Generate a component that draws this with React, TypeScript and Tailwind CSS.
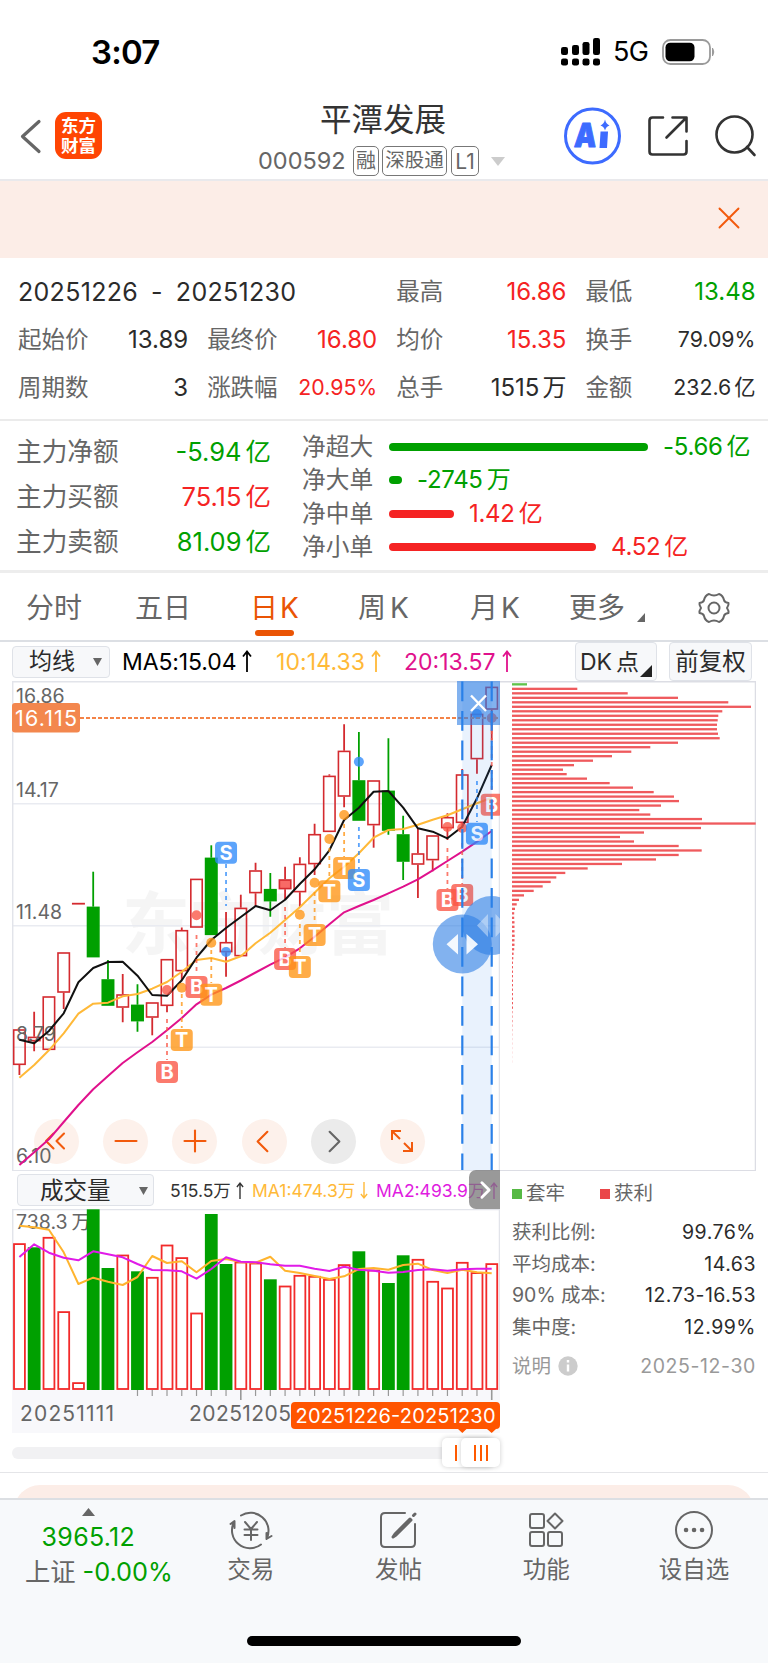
import { ChevronLeft, ChevronRight, ChevronsLeft, Minus, Plus, X } from 'lucide-react';
import type { ReactNode } from 'react';

const RED = '#d42a2f';
const GREEN = '#00a000';

// x position of the n-th trading day
const cx = (i: number) => 19.4 + 14.76 * i;
const toPoints = (ys: number[]) => ys.map((y, i) => `${cx(i).toFixed(1)},${y}`).join(' ');

// [kind, high, bodyTop, bodyBottom, low], kind: 0 down, 1 up, 2 flat, 3 up and filled
const candles: [number, number, number, number, number][] = [
    [1, 1029.3, 1029.3, 1065, 1075],
    [1, 1011.7, 1036.7, 1041.3, 1051.3],
    [1, 996.3, 996.3, 1050, 1050],
    [1, 952.3, 952.3, 992.7, 1009],
    [2, 903.7, 903.7, 903.7, 903.7],
    [0, 871.7, 906.7, 957.3, 957.3],
    [0, 960, 979.3, 1005.7, 1005.7],
    [1, 974, 994.3, 1007.7, 1022.3],
    [0, 984.3, 1004.7, 1021.3, 1031.7],
    [1, 1002.3, 1002.3, 1017.7, 1035.3],
    [1, 959, 959, 1006, 1012.3],
    [1, 927.5, 930, 971.3, 980],
    [1, 878.7, 878.7, 927.7, 927.7],
    [0, 845.3, 857.7, 935, 935],
    [1, 912, 942, 952.3, 976.7],
    [1, 894.7, 907.7, 956.3, 956.3],
    [1, 862.7, 870.3, 893.3, 907],
    [0, 873, 889, 901.3, 916.7],
    [3, 866.7, 879.3, 889.3, 900],
    [1, 857.3, 863.7, 892.3, 906.7],
    [1, 823.7, 834, 864.3, 875],
    [1, 774.3, 775.7, 832, 832],
    [1, 724.3, 750.7, 796.7, 807.3],
    [0, 732, 780.3, 820.7, 820.7],
    [1, 780.3, 780.3, 825.3, 847.7],
    [0, 738.3, 790.7, 830.7, 834.7],
    [0, 815.7, 834.3, 861.7, 880],
    [1, 828.3, 853.3, 864.7, 898],
    [1, 835.3, 835.3, 860.3, 871.3],
    [1, 813.3, 817, 828.3, 840],
    [1, 769, 774.3, 823, 828],
    [1, 713.7, 713.7, 759.3, 773.7],
    [1, 686.7, 686.7, 709.7, 740],
];

const ma5 = [1039.7, 1043.3, 1031, 1013.3, 982.3, 968, 962, 961.7, 975.7, 995, 995.7, 980.3, 957.7, 940, 928, 917, 906, 910.3, 899.7, 884, 869.3, 850.3, 820, 807.7, 791.7, 791, 807.7, 828.3, 831.7, 838.3, 826.7, 798.3, 765];
const ma10 = [1077.7, 1065, 1050.3, 1033.3, 1013.7, 1003.7, 1002.7, 996.3, 994, 988.7, 982, 971.7, 960, 958, 961.7, 956.3, 943.3, 932.7, 920, 907.3, 892.7, 878.3, 866.7, 853.3, 837.7, 830, 829, 824.7, 819.7, 815.3, 809.3, 803.3, 797.7];
const ma20 = [1165, 1152.3, 1139.3, 1122, 1105, 1089.3, 1076, 1063, 1052.3, 1042, 1030.3, 1018, 1004.3, 994.7, 988, 980.5, 972.5, 964.7, 957.3, 948.3, 936.7, 924.3, 912.3, 906, 900, 893.3, 886.7, 879.3, 870.3, 861, 851.7, 841.7, 831];

// day index, label, badge y, dot y (0 = none), dash from, dash to
const markers: [number, 'B' | 'S' | 'T', number, number, number, number][] = [
    [10, 'B', 1072, 990, 1019, 1060],
    [11, 'T', 1040, 987.7, 994, 1028],
    [12, 'B', 987, 915.3, 935, 975],
    [13, 'T', 994.7, 942.7, 950, 983],
    [14, 'S', 852.7, 952, 864, 906],
    [18, 'B', 959, 0, 907, 948],
    [19, 'T', 967, 914.7, 924, 956],
    [20, 'T', 935, 882.7, 892, 924],
    [21, 'T', 891.3, 839, 848, 880],
    [22, 'T', 868, 815, 824, 857],
    [23, 'S', 880, 761.7, 827, 869],
    [29, 'B', 900, 827, 848, 890],
    [30, 'B', 895, 828, 843, 884],
    [31, 'S', 833.7, 714, 781, 822],
    [32, 'B', 804.7, 718, 722, 794],
];
const markerColor = { B: '#fb5545', S: '#2f8bfb', T: '#ff9614' };

// [up, top]
const volumes: [number, number][] = [
    [1, 1243.3], [0, 1247.3], [1, 1237], [1, 1311.3], [1, 1382.3], [0, 1209.3], [0, 1268], [1, 1254.7], [0, 1271.3], [1, 1277], [1, 1244.7],
    [1, 1257.3], [1, 1312.7], [0, 1214], [0, 1264], [1, 1261.7], [1, 1262.7], [0, 1279.3], [1, 1285.7], [1, 1275], [1, 1276], [1, 1279],
    [1, 1264.3], [0, 1251.3], [1, 1269.7], [0, 1283], [0, 1255.3], [1, 1259], [1, 1281], [1, 1287.7], [1, 1262], [1, 1272.3], [1, 1263.3],
];
const volMa1 = [182, 187, 194, 262, 357, 338, 350, 360, 336, 273, 294, 289, 322, 288, 282, 291, 293, 275, 317, 324, 333, 342, 334, 312, 309, 314, 300, 296, 315, 324, 314, 322, 325].map((v) => +(1165 + v / 3).toFixed(1));
const volMa2 = [276, 238, 263, 278, 286, 259, 268, 277, 297, 315, 316, 319, 341, 312, 277, 290, 292, 298, 302, 302, 311, 318, 305, 314, 317, 323, 321, 315, 313, 317, 313, 311, 311].map((v) => +(1165 + v / 3).toFixed(1));

// cost distribution, bar lengths from the top price down
const chips = [
    15, 65.3, 115.7, 166, 216.3, 239, 210.3, 206.3, 205.7, 205, 205, 206, 207.7, 166, 138.3, 119.3, 100, 81, 62, 51, 54.7, 75, 97.7, 121, 141.7,
    162, 167, 149, 127.3, 138.3, 190, 243.7, 189, 132, 108, 122, 166.7, 189.7, 166.7, 144, 110, 75.7, 53.3, 44.3, 38.7, 30.7, 21.7, 12, 7, 4.7,
    3, 2.2, 2.2, 2.5, 2.5, 2.5, 2.7, 2.5, 2.5, 2.2, 1.6, 1.3, 1, 1, 1, 1, 1, 1, 1, 1, 1, 1, 1, 1, 1, 1, 0.8, 0.6, 0.5, 0.4, 0.4, 0.3, 0.3, 0.2, 0.2,
];

function Stat({ label, value, unit, className = '' }: { label: string; value: string; unit?: string; className?: string }) {
    return (
        <div className="flex h-12 items-center justify-between whitespace-nowrap">
            <span className="text-[23.5px] text-[#666]">{label}</span>
            <span className={`text-[24px] ${className || 'text-[#2b2b2b]'}`}>
                {value}
                {unit && <span className="ml-[3px]">{unit}</span>}
            </span>
        </div>
    );
}

function Flow({ label, value, red = false }: { label: string; value: string; red?: boolean }) {
    return (
        <div className="flex h-[45.3px] items-center justify-between whitespace-nowrap">
            <span className="text-[25.7px] text-[#666]">{label}</span>
            <span className={`text-[25.5px] ${red ? 'text-[#f52323]' : 'text-[#00a000]'}`}>
                {value}
                <span className="ml-[4px]">亿</span>
            </span>
        </div>
    );
}

function OrderBar({ label, value, unit, width, red = false }: { label: string; value: string; unit: string; width: number; red?: boolean }) {
    return (
        <div className="flex h-[33.5px] items-center whitespace-nowrap">
            <span className="w-[87px] text-[23.7px] text-[#666]">{label}</span>
            <span className={`h-2 rounded-full ${red ? 'bg-[#f52323]' : 'bg-[#00a000]'}`} style={{ width }} />
            <span className={`ml-[15px] text-[24px] tracking-[-0.3px] ${red ? 'text-[#f52323]' : 'text-[#00a000]'}`}>
                {value}
                <span className="ml-[4px]">{unit}</span>
            </span>
        </div>
    );
}

function RoundButton({ children, gray = false }: { children: ReactNode; gray?: boolean }) {
    return (
        <button className={`flex size-[45px] items-center justify-center rounded-full ${gray ? 'bg-[#ebebeb] text-[#666]' : 'bg-[#fdf1eb] text-[#f25a0c]'}`}>
            {children}
        </button>
    );
}

function InfoRow({ label, value }: { label: string; value: string }) {
    return (
        <div className="flex h-[31.6px] items-center justify-between whitespace-nowrap">
            <span className="text-[#666]">{label}</span>
            <span className="tracking-[0.5px] text-[#2b2b2b]">{value}</span>
        </div>
    );
}

function NavItem({ label, children }: { label: string; children: ReactNode }) {
    return (
        <div className="flex w-[148px] flex-col items-center">
            <svg width="44" height="44" viewBox="-22 -22 44 44" fill="none" stroke="#666" strokeWidth="2" strokeLinecap="round" strokeLinejoin="round">
                {children}
            </svg>
            <span className="mt-[6px] text-[23.5px] leading-[24px] text-[#666]">{label}</span>
        </div>
    );
}

// thin arrow behind the average values
function Trend({ down = false, small = false }: { down?: boolean; small?: boolean }) {
    return (
        <svg
            width={small ? 8 : 10}
            height={small ? 17 : 22}
            viewBox="0 0 10 22"
            className={`inline-block ${small ? 'ml-[5px]' : 'ml-[6px]'} align-[-2px] ${down ? 'rotate-180' : ''}`}
            fill="none"
            stroke="currentColor"
            strokeWidth="1.8"
        >
            <path d="M5 22V1.500M1 6.500L5 1.500L9 6.500" />
        </svg>
    );
}

function StatusBar() {
    return (
        <div className="flex h-[100px] items-center pt-[3px] pl-[91px] text-black">
            <span className="mt-[2px] w-[470px] text-[33px] font-semibold tracking-[-0.8px]">3:07</span>
            <svg width="40" height="28" viewBox="0 0 40 28">
                {[[0, 9], [11, 7], [21.5, 4], [32, 0]].map(([x, y]) => (
                    <g key={x}>
                        <rect x={x} y={y} width="7" height={17 - y} rx="2.2" />
                        <rect x={x} y="20.5" width="7" height="7" rx="2.2" />
                    </g>
                ))}
            </svg>
            <span className="mt-[2px] ml-[12px] w-[50px] text-[27px] tracking-[-0.6px]">5G</span>
            <svg width="54" height="26" viewBox="0 0 54 26" className="-ml-px">
                <rect x="1" y="1" width="47" height="24" rx="7.5" fill="none" stroke="#9a9a9a" strokeWidth="1.8" />
                <rect x="3.5" y="3.7" width="29" height="18.6" rx="4.8" />
                <path d="M50.5 9 q2.6 4 0 8z" fill="#9a9a9a" stroke="#9a9a9a" strokeWidth="1" />
            </svg>
        </div>
    );
}

function Header() {
    const chip = 'flex h-[30px] items-center justify-center rounded-[5px] border-[1.5px] border-[#777]';
    return (
        <header className="flex h-[81px] items-start border-b-2 border-[#e9e9ec]">
            <svg width="55" height="72" viewBox="0 0 55 72" fill="none" stroke="#666" strokeWidth="3.2" strokeLinecap="round" strokeLinejoin="round">
                <path d="M39 21.500 L22.500 36.500 L39 51.500" />
            </svg>
            <div className="mt-[12px] flex size-[47px] flex-col items-center justify-center rounded-[11px] bg-[#ff4503] text-[17.5px] leading-[19.5px] font-bold text-white">
                <span>东方</span>
                <span>财富</span>
            </div>
            <div className="ml-[130px] w-[332px] pt-px pl-[26px]">
                <div className="w-[250px] pl-[62px] text-[31.5px] leading-[38px] text-[#333]">平潭发展</div>
                <div className="mt-[7px] flex items-center whitespace-nowrap text-[21px] leading-none text-[#666]">
                    <span className="w-[95px] text-[23.5px]">000592</span>
                    <span className={`${chip} w-[26px] text-[20px]`}>融</span>
                    <span className={`${chip} ml-[3px] w-[65px] text-[19.5px]`}>深股通</span>
                    <span className={`${chip} ml-[4px] w-[28px] text-[21px]`}>L1</span>
                    <svg width="14" height="9" className="ml-3">
                        <path d="M0 0H14L7 9z" fill="#ccc" />
                    </svg>
                </div>
            </div>
            <svg width="204" height="74" viewBox="564 100 204 74" fill="none" stroke="#333" strokeWidth="2.6" strokeLinecap="round" strokeLinejoin="round">
                <circle cx="592.5" cy="136" r="27" stroke="#3d6bff" strokeWidth="3" />
                <g stroke="none" fill="#3d6bff">
                    <text x="574" y="147" fontSize="33" fontWeight="900" textLength="22" lengthAdjust="spacingAndGlyphs" transform="skewX(-4) translate(10 0)" stroke="#3d6bff" strokeWidth="1">A</text>
                    <path d="M600.500 131.500 h7.500 l-1 16.500 h-7.500z" />
                    <path d="M605 119.500 q1 4.500 4.500 6 q-3.500 1-4.500 5 q-1-4-4.500-5 q3.500-1.500 4.500-6z" />
                </g>
                <path d="M663 117.500 H652.500 Q649.500 117.500 649.500 120.500 V151.500 Q649.500 154.500 652.500 154.500 H683.500 Q686.500 154.500 686.500 151.500 V141 M666.500 137.500 L686 118 M672.500 117.500 H686.500 V131.500" />
                <circle cx="734.500" cy="134.500" r="18" />
                <path d="M747 147 L754.500 155" />
            </svg>
        </header>
    );
}

function StatsPanel() {
    return (
        <section className="grid h-[163px] grid-cols-4 content-start gap-x-[19px] border-b-2 border-[#ebebeb] pt-[10px] pr-[12.5px] pl-[18px] leading-none">
            <div className="col-span-2 flex h-12 items-center text-[25px] tracking-[0.3px] whitespace-pre text-[#2b2b2b]">
                20251226<span className="mx-[13px]">-</span>20251230
            </div>
            <Stat label="最高" value="16.86" className="text-[#f52323]" />
            <Stat label="最低" value="13.48" className="text-[#00a000]" />
            <Stat label="起始价" value="13.89" />
            <Stat label="最终价" value="16.80" className="text-[#f52323]" />
            <Stat label="均价" value="15.35" className="text-[#f52323]" />
            <Stat label="换手" value="79.09%" className="!text-[21.3px] text-[#2b2b2b]" />
            <Stat label="周期数" value="3" />
            <Stat label="涨跌幅" value="20.95%" className="!text-[21.3px] text-[#f52323]" />
            <Stat label="总手" value="1515" unit="万" className="!text-[24px] text-[#2b2b2b]" />
            <Stat label="金额" value="232.6" unit="亿" className="!text-[21.3px] text-[#2b2b2b]" />
        </section>
    );
}

function FundFlow() {
    return (
        <section className="flex h-[152px] border-b-[3px] border-[#ededed] leading-none">
            <div className="w-[302px] pt-2 pr-[31px] pl-[16px]">
                <Flow label="主力净额" value="-5.94" />
                <Flow label="主力买额" value="75.15" red />
                <Flow label="主力卖额" value="81.09" />
            </div>
            <div className="flex-1 pt-[9px]">
                <OrderBar label="净超大" value="-5.66" unit="亿" width={259} />
                <OrderBar label="净大单" value="-2745" unit="万" width={13} />
                <OrderBar label="净中单" value="1.42" unit="亿" width={65} red />
                <OrderBar label="净小单" value="4.52" unit="亿" width={207} red />
            </div>
        </section>
    );
}

function Tabs() {
    return (
        <nav className="flex h-[69px] items-center border-b-2 border-[#dcdfe4] pt-[2px] pl-[26px] text-[28px] leading-none whitespace-nowrap text-[#666]">
            <span className="w-[109px]">分时</span>
            <span className="w-[115px]">五日</span>
            <span className="relative flex h-full w-[108px] items-center text-[#ea5404]">
                日<span className="ml-[2px]">K</span>
                <span className="absolute bottom-[4px] left-[5px] h-[6px] w-[39px] rounded-full bg-[#ea5404]" />
            </span>
            <span className="w-[112px]">周<span className="ml-[4px]">K</span></span>
            <span className="w-[99px]">月<span className="ml-[3px]">K</span></span>
            <span>更多</span>
            <svg width="8" height="9" className="mt-[19px] ml-[12px]">
                <path d="M8 0V9H0z" fill="#666" />
            </svg>
            <svg width="34" height="34" viewBox="-17 -17 34 34" className="ml-[52px]" fill="none" stroke="#666" strokeWidth="2" strokeLinejoin="round">
                <circle r="5.5" />
                <path d="M-5 -14 Q0 -11 5 -14 Q9 -12.500 10 -8 Q10.500 -5.500 14.500 -5 Q15 -3 13 0 Q15 3 14.500 5 Q10.500 5.500 10 8 Q9 12.500 5 14 Q0 11 -5 14 Q-9 12.500 -10 8 Q-10.500 5.500 -14.500 5 Q-15 3 -13 0 Q-15 -3 -14.500 -5 Q-10.500 -5.500 -10 -8 Q-9 -12.500 -5 -14z" />
            </svg>
        </nav>
    );
}

function IndicatorRow() {
    return (
        <div className="flex h-[39px] items-center pr-4 pl-3 text-[23px] leading-none whitespace-nowrap">
            <div className="flex h-[32px] w-[98px] items-center rounded-[4px] border-[1.5px] border-[#dfe2e8] bg-[#f7f8fa] pl-[16px] text-[#2b2b2b]">
                均线
                <svg width="9" height="8" className="ml-[18px]">
                    <path d="M0 0H9L4.500 8z" fill="#666" />
                </svg>
            </div>
            <span className="mt-px ml-3 w-[154px] tracking-[-0.1px] text-black">MA5:15.04<Trend /></span>
            <span className="mt-px w-[128px] tracking-[0.1px] text-[#ffb938]">10:14.33<Trend /></span>
            <span className="mt-px w-[171px] text-[#e0118c]">20:13.57<Trend /></span>
            <div className="relative flex h-[39px] w-[82px] items-center rounded-[4px] border-[1.5px] border-[#dfe2e8] bg-[#f7f8fa] pt-px pl-[4px] text-[#2b2b2b]">
                DK<span className="ml-[4px]">点</span>
                <svg width="12" height="12" className="absolute right-[4px] bottom-[3px]">
                    <path d="M12 0V12H0z" fill="#222" />
                </svg>
            </div>
            <div className="ml-3 flex h-[39px] w-[83px] items-center justify-center rounded-[4px] border-[1.5px] border-[#dfe2e8] bg-[#f7f8fa] pt-px text-[23.500px] text-[#2b2b2b]">
                前复权
            </div>
        </div>
    );
}

function PriceChart() {
    return (
        <div className="relative h-[489px]">
            {/* the curves and the lowest price label stay above the buttons */}
            <svg width="488" height="489" viewBox="12 681 488 489" className="pointer-events-none relative z-10 block">
                <text x="122" y="949" fontSize="68" fontWeight="700" fill="#000" opacity="0.035">东方财富</text>
                <g stroke="#e9ebf1" strokeWidth="1.5">
                    <path d="M12 803.800H500 M12 925.800H500 M12 1047.300H500" />
                    <path d="M12.700 1170V681.700H499.500V1170" fill="none" stroke="#e2e4ea" />
                </g>
                <g fontSize="19.5" fill="#666">
                    <text x="16" y="702.500">16.86</text>
                    <text x="16" y="797">14.17</text>
                    <text x="16" y="919">11.48</text>
                </g>
                {candles.map(([kind, high, top, bottom, low], i) => {
                    const x = cx(i);
                    if (kind === 2) return <path key={i} d={`M${x - 6.5} ${top}h13`} stroke={RED} strokeWidth="1.8" />;
                    const color = kind ? RED : GREEN;
                    return (
                        <g key={i} stroke={color} strokeWidth="1.8">
                            <path d={`M${x} ${high}V${top}M${x} ${bottom}V${low}`} />
                            <rect
                                x={x - 5.7}
                                y={top + 0.7}
                                width="11.4"
                                height={bottom - top - 1.4}
                                fill={kind === 0 ? GREEN : kind === 3 ? '#f86a66' : 'none'}
                                strokeWidth="1.6"
                            />
                        </g>
                    );
                })}
                <g fontSize="19.5" fill="#666">
                    <text x="16" y="1040.700">8.79</text>
                    <text x="16" y="1163">6.10</text>
                </g>
                <g fill="none" strokeWidth="2" strokeLinejoin="round">
                    <polyline points={toPoints(ma20)} stroke="#e0118c" />
                    <polyline points={toPoints(ma10)} stroke="#ffb938" />
                    <polyline points={toPoints(ma5)} stroke="#111" />
                </g>
                {markers.map(([day, label, y, dot, from, to]) => {
                    const x = cx(day);
                    const color = markerColor[label];
                    return (
                        <g key={day} opacity="0.78">
                            <path d={`M${x} ${from}V${to}`} stroke={color} strokeWidth="1.8" strokeDasharray="4 4" />
                            {dot > 0 && <circle cx={x} cy={dot} r="5" fill={color} />}
                            <rect x={x - 11} y={y - 11} width="22" height="22" rx="4" fill={color} />
                            <text x={x} y={y + 7.2} fontSize="20" fontWeight="700" fill="#fff" textAnchor="middle">{label}</text>
                        </g>
                    );
                })}
                <path d="M80 718H500" stroke="#f48347" strokeWidth="1.8" strokeDasharray="4 2" />
                <rect x="12" y="703" width="68" height="29.500" rx="3" fill="#f3874e" />
                <text x="15" y="725.500" fontSize="21.500" fill="#fff" textLength="62">16.115</text>

                {/* range selection */}
                <rect x="462.300" y="682" width="29.400" height="488" fill="#2a80e8" opacity="0.1" />
                <g fill="#2f7fe4">
                    <rect x="457" y="681" width="43" height="44" opacity="0.6" />
                    <circle cx="491.700" cy="925.500" r="29.500" opacity="0.6" />
                    <circle cx="462.300" cy="944" r="29.500" opacity="0.6" />
                </g>
                <path d="M488 914v23l-11-11.500z M495.500 914v23l11-11.500z" fill="#fff" opacity="0.4" />
                <path d="M458 934v20.500l-11.500-10.200z M466.500 934v20.500l11.500-10.200z" fill="#fff" opacity="0.9" />
                <path d="M462.300 681.500V1170 M491.700 681.500V1170" stroke="#2a80e8" strokeWidth="2.200" strokeDasharray="19.800 9.700" />
                <path d="M471 695.500l15 15.500M486 695.500l-15 15.500" stroke="#fff" strokeWidth="2.400" />
            </svg>
            <div className="absolute top-[437.500px] left-[22px] flex gap-[24.200px]">
                <RoundButton>
                    <ChevronsLeft size={36} strokeWidth={1.4} className="mr-[4px]" />
                </RoundButton>
                <RoundButton><Minus size={36} strokeWidth={1.4} /></RoundButton>
                <RoundButton><Plus size={36} strokeWidth={1.4} /></RoundButton>
                <RoundButton><ChevronLeft size={39} strokeWidth={1.3} className="mr-[4px]" /></RoundButton>
                <RoundButton gray><ChevronRight size={39} strokeWidth={1.3} className="ml-[2px]" /></RoundButton>
                <RoundButton>
                    <svg width="24" height="24" fill="none" stroke="currentColor" strokeWidth="2">
                        <path d="M2 11V2H11M2 2l8 8M22 13v9h-9M22 22l-8-8" />
                    </svg>
                </RoundButton>
            </div>
        </div>
    );
}

function VolumeHeader() {
    return (
        <div className="relative flex h-[39px] items-center border-t-[1.5px] border-[#e2e4ea] pl-[5px] text-[17.5px] leading-none whitespace-nowrap">
            <div className="flex h-[32px] w-[137px] items-center rounded-[4px] border-[1.5px] border-[#dfe2e8] bg-[#f7f8fa] pt-px pl-[22px] text-[23.5px] text-[#2b2b2b]">
                成交量
                <svg width="9" height="8" className="ml-[28px]">
                    <path d="M0 0H9L4.500 8z" fill="#666" />
                </svg>
            </div>
            <span className="mt-px ml-[16px] w-[82px] text-[#333]">515.5万<Trend small /></span>
            <span className="mt-px w-[124px] text-[#ffb938]">MA1:474.3万<Trend small down /></span>
            <span className="mt-px text-[#e01be0]">MA2:493.9万<Trend small /></span>
            <div className="absolute -top-px right-0 flex h-[39px] w-[31px] items-center justify-center rounded-l-[7px] bg-[#777]/75">
                <ChevronRight size={34} strokeWidth={2.4} className="ml-[2px] text-white" />
            </div>
        </div>
    );
}

function VolumeChart() {
    return (
        <svg width="488" height="225" viewBox="12 1209 488 225" className="block">
            <rect x="12" y="1390" width="488" height="43" fill="#f8f8fb" />
            <path d="M12.700 1390V1209.500H499.500V1390" fill="none" stroke="#e2e4ea" strokeWidth="1.5" />
            <text x="16" y="1228.500" fontSize="19.500" fill="#666">
                738.3<tspan dx="4">万</tspan>
            </text>
            {volumes.map(([up, top], i) =>
                up ? (
                    <rect key={i} x={cx(i) - 5.4} y={top + 0.8} width="10.9" height={1389 - top - 0.8} fill="none" stroke="#f22a2a" strokeWidth="1.8" />
                ) : (
                    <rect key={i} x={cx(i) - 6.4} y={top} width="12.8" height={1390 - top} fill={GREEN} />
                )
            )}
            <g fill="none" strokeWidth="2" strokeLinejoin="round">
                <polyline points={toPoints(volMa1)} stroke="#ffb42e" />
                <polyline points={toPoints(volMa2)} stroke="#e01be8" />
            </g>
            {volumes.map((_, i) => i >= 8 && <path key={i} d={`M${cx(i)} 1390V${i === 15 || i === 32 ? 1400 : 1396}`} stroke="#999" strokeWidth={i === 15 || i === 32 ? 1.6 : 1.2} />)}
            <g fontSize="21" fill="#666">
                <text x="20" y="1421" textLength="94">20251111</text>
                <text x="189" y="1421" textLength="102">20251205</text>
            </g>
            <path d="M295 1402H496Q500 1402 500 1406V1425Q500 1429 496 1429L491.700 1433L487 1429H466.500L462.300 1433L458 1429H295Q291 1429 291 1425V1406Q291 1402 295 1402z" fill="#ff5500" />
            <text x="295.500" y="1423" fontSize="20" fill="#fff" textLength="200">20251226-20251230</text>
        </svg>
    );
}

function RangeSlider() {
    return (
        <div className="relative mt-[4px] flex h-[30px] items-center">
            <div className="h-[12px] w-full rounded-full bg-[#f1f1f3]" />
            <div className="absolute top-0 right-[7px] flex h-[29px] w-[51px] items-center rounded-[5px] bg-white pl-[13px] shadow-[0_0_5px_rgba(0,0,0,0.2)]">
                <span className="h-[16px] w-[2px] bg-[#ff5a00]" />
            </div>
            <div className="absolute top-0 right-0 flex h-[29px] w-[39px] items-center justify-center gap-[4px] rounded-[5px] bg-white shadow-[0_0_5px_rgba(0,0,0,0.2)]">
                <span className="h-[16px] w-[2px] bg-[#ff5a00]" />
                <span className="h-[16px] w-[2px] bg-[#ff5a00]" />
                <span className="h-[16px] w-[2px] bg-[#ff5a00]" />
            </div>
        </div>
    );
}

function ChipPanel() {
    return (
        <aside className="flex-1">
            <svg width="256" height="489" viewBox="500 681 256 489" className="block">
                <path d="M500 681.700H755.500V1170" fill="none" stroke="#dcdde4" strokeWidth="1.5" />
                {chips.map((w, i) => (
                    <rect key={i} x="512" y={683.2 + 4.49 * i} width={Math.max(w, 1)} height="2.3" fill={i ? '#ef5a5d' : '#5fc24a'} opacity={i > 72 ? w * 0.5 : 1} />
                ))}
            </svg>
            <div className="border-t-[1.5px] border-[#dcdde4] pl-3 text-[19.5px] leading-none">
                <div className="flex h-[46px] items-center text-[#666]">
                    <span className="mr-[4px] size-[10px] bg-[#56b944]" />套牢
                    <span className="mr-[4px] ml-[35px] size-[10px] bg-[#ea4649]" />获利
                </div>
                <InfoRow label="获利比例:" value="99.76%" />
                <InfoRow label="平均成本:" value="14.63" />
                <InfoRow label="90% 成本:" value="12.73-16.53" />
                <InfoRow label="集中度:" value="12.99%" />
                <div className="mt-[6px] flex h-[34px] items-center justify-between text-[#999]">
                    <span className="flex items-center gap-[7px]">
                        说明
                        <svg width="20" height="20" viewBox="0 0 20 20">
                            <circle cx="10" cy="10" r="9.7" fill="#ccc" />
                            <path d="M10 4v2.600M10 8.400V15.500" stroke="#fff" strokeWidth="2.4" />
                        </svg>
                    </span>
                    <span className="tracking-[0.600px]">2025-12-30</span>
                </div>
            </div>
        </aside>
    );
}

function BottomBar() {
    return (
        <footer className="h-[165px] border-t-2 border-[#dcdfe3] bg-[#f7f9fb] leading-none">
            <div className="flex h-[136px] pt-[8px]">
                <div className="flex w-[177px] flex-col items-center">
                    <svg width="13" height="8">
                        <path d="M6.500 0L13 8H0z" fill="#666" />
                    </svg>
                    <span className="mt-[8px] text-[25px] leading-[26px] tracking-[0.3px] text-[#00a000]">3965.12</span>
                    <span className="mt-[9px] ml-[21px] text-[25.3px] leading-[26px] whitespace-nowrap text-[#00a000]">
                        <span className="mr-[7px] text-[#666]">上证</span>-0.00%
                    </span>
                </div>
                <NavItem label="交易">
                    <path d="M-10 -14.500A18 18 0 0 1 16 8M10 14.500A18 18 0 0 1 -17 -8M-20.500 -6L-16.500 -9V-2M20.500 6L15.500 9V3" />
                    <path d="M-6 -8L0 -1L6 -8M0 -1V10M-6.500 -0.500H6.500M-6.500 5H6.500" />
                </NavItem>
                <NavItem label="发帖">
                    <path d="M7 -17H-13Q-17 -17 -17 -13V13Q-17 17 -13 17H13Q17 17 17 13V-6" />
                    <path d="M12 -11L-3 4L-5 7L-2 5L13 -10z M15.500 -14.500L17 -16" strokeWidth="3" />
                </NavItem>
                <NavItem label="功能">
                    <rect x="-16" y="-16" width="14" height="14" rx="2" />
                    <rect x="-16" y="2" width="14" height="14" rx="2" />
                    <rect x="2" y="2" width="14" height="14" rx="2" />
                    <path d="M9 -16.500L16.500 -9L9 -1.500L1.500 -9z" />
                </NavItem>
                <NavItem label="设自选">
                    <circle r="18" />
                    <path d="M-8 0h0.100M0 0h0.100M8 0h0.100" strokeWidth="4.5" />
                </NavItem>
            </div>
            <div className="mx-auto h-[10px] w-[274px] rounded-full bg-black" />
        </footer>
    );
}

export default function App() {
    return (
        <div className="flex h-[1663px] w-[768px] flex-col overflow-hidden bg-white font-[Inter,'Noto_Sans_CJK_SC',sans-serif] text-[#333]">
            <StatusBar />
            <Header />
            <div className="flex h-[77px] items-center justify-end bg-[#fcede7] pr-[20.500px] pb-[3px]">
                <X size={38} strokeWidth={1.2} className="text-[#f25a0c]" />
            </div>
            <StatsPanel />
            <FundFlow />
            <Tabs />
            <IndicatorRow />
            <div className="flex h-[792px] border-b-[1.5px] border-[#e4e5e8] px-3">
                <div className="w-[488px]">
                    <PriceChart />
                    <VolumeHeader />
                    <VolumeChart />
                    <RangeSlider />
                </div>
                <ChipPanel />
            </div>
            <div className="mt-[12px] h-[13px] overflow-hidden px-[14px]">
                <div className="h-[60px] rounded-t-[26px] bg-[#fcede7]" />
            </div>
            <BottomBar />
        </div>
    );
}
